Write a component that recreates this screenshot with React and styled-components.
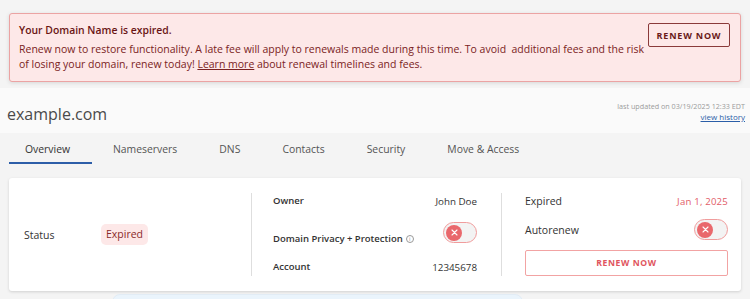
import React from "react";
import styled, { createGlobalStyle } from "styled-components";

const Global = createGlobalStyle`
  html, body { margin: 0; padding: 0; background: #f4f4f4; overflow: hidden; }
  body { font-family: "Open Sans", "Liberation Sans", sans-serif; }
  * { box-sizing: border-box; }
`;

const Page = styled.div`
  width: 750px;
  height: 299px;
  overflow: hidden;
  padding-top: 13px;
`;

const Alert = styled.div`
  margin: 0 9px;
  display: flex;
  align-items: flex-start;
  background: #fde8e8;
  border: 1px solid #eba3a3;
  border-radius: 3px;
  box-shadow: 0 1px 4px rgba(0, 0, 0, 0.12);
  padding: 8px 10px 8px 9px;
  height: 69px;
`;

const AlertText = styled.div`
  flex: 1;
  min-width: 0;
  color: #7a2323;
`;

const AlertTitle = styled.div`
  font-size: 10.4px;
  font-weight: 600;
  line-height: 16px;
  color: #6a1515;
  margin-bottom: 4px;
`;

const AlertBody = styled.div`
  font-size: 10.5px;
  line-height: 15px;
  white-space: nowrap;
  a { color: inherit; text-decoration: underline; }
`;

const OutlineButton = styled.button`
  flex-shrink: 0;
  font-family: inherit;
  background: ${(p) => p.$bg || "transparent"};
  border: 1px solid ${(p) => p.$border};
  color: ${(p) => p.$color};
  border-radius: 2px;
  font-size: ${(p) => p.$fs || "9px"};
  font-weight: 700;
  letter-spacing: ${(p) => p.$ls || "0.8px"};
  width: ${(p) => p.$w || "auto"};
  height: ${(p) => p.$h};
  margin-top: ${(p) => p.$mt || "0"};
  padding: 0;
  cursor: pointer;
`;

const Header = styled.div`
  margin-top: 6px;
  height: 45px;
  background: #fafafa;
  display: flex;
  justify-content: space-between;
  align-items: flex-start;
  padding: 0 5px 0 7px;
`;

const DomainName = styled.div`
  font-size: 16px;
  color: #4a4a4a;
  line-height: 24px;
  margin-top: 14px;
`;

const Updated = styled.div`
  text-align: right;
  margin-top: 13px;
`;

const UpdatedLine = styled.div`
  font-size: 7.2px;
  line-height: 10px;
  color: #9a9a9a;
`;

const HistoryLink = styled.a`
  display: block;
  font-size: 8px;
  line-height: 12px;
  color: #2b5ea8;
  text-decoration: underline;
`;

const Tabs = styled.div`
  display: flex;
  gap: 9px;
  padding-left: 9px;
  height: 32px;
`;

const Tab = styled.div`
  padding: 0 17px 0 16px;
  min-width: ${(p) => (p.$active ? "50px" : "0")};
  margin-right: ${(p) => (p.$active ? "-4px" : "0")};
  font-size: 10.4px;
  color: ${(p) => (p.$active ? "#333" : "#555")};
  border-bottom: 2px solid ${(p) => (p.$active ? "#2d5ea8" : "transparent")};
  height: 29px;
  line-height: 33px;
  box-sizing: content-box;
`;

const Card = styled.div`
  margin: 13px 9px 0;
  height: 113px;
  background: #fff;
  border-radius: 3px;
  box-shadow: 0 1px 3px rgba(0, 0, 0, 0.15);
  display: flex;
  padding: 15px 13px 15px 15px;
`;

const StatusCol = styled.div`
  width: 227px;
  display: flex;
  align-items: center;
`;

const StatusLabel = styled.div`
  width: 77px;
  font-size: 10.5px;
  color: #333;
`;

const Badge = styled.div`
  background: #fde8e8;
  color: #8a2a2a;
  font-size: 10.5px;
  line-height: 21px;
  padding: 0 5px;
  border-radius: 5px;
`;

const Divider = styled.div`
  width: 1px;
  background: #dedede;
`;

const InfoCol = styled.div`
  width: 249px;
  padding: 0 24px 0 21px;
  display: flex;
  flex-direction: column;
  gap: 13px;
`;

const SideCol = styled.div`
  flex: 1;
  padding-left: 23px;
  display: flex;
  flex-direction: column;
  gap: 10px;
`;

const Row = styled.div`
  display: flex;
  justify-content: space-between;
  align-items: ${(p) => p.$align || "center"};
  height: ${(p) => p.$h};
`;

const Label = styled.div`
  font-size: ${(p) => (p.$strong ? "9.5px" : "10.5px")};
  font-weight: ${(p) => (p.$strong ? 600 : 400)};
  color: #333;
  display: flex;
  align-items: center;
  gap: 3px;
  line-height: 14px;
`;

const Value = styled.div`
  font-size: ${(p) => p.$size || "9.8px"};
  color: ${(p) => p.$color || "#333"};
  letter-spacing: ${(p) => p.$ls || "0"};
`;

const Info = styled.span`
  display: inline-flex;
  width: 8px;
  height: 8px;
  border: 0.8px solid #999;
  border-radius: 50%;
  font-size: 6px;
  line-height: 1;
  color: #999;
  align-items: center;
  justify-content: center;
  font-weight: 400;
`;

const Track = styled.div`
  width: 34px;
  height: 21px;
  border-radius: 11px;
  border: 1px solid #f09c9c;
  background: #f3f3f3;
  display: flex;
  align-items: center;
  padding-left: 2px;
  margin-bottom: ${(p) => p.$mb || "0"};
`;

const Knob = styled.div`
  width: 16px;
  height: 16px;
  border-radius: 50%;
  background: #e9686c;
  display: flex;
  align-items: center;
  justify-content: center;
`;

const Peek = styled.div`
  margin: 3px 0 0 112px;
  width: 411px;
  height: 20px;
  background: #eaf4fc;
  border: 1px solid #e2ecf5;
  border-radius: 8px;
`;

const Toggle = ({ mb }) => (
  <Track $mb={mb}>
    <Knob>
      <svg width="7" height="7" viewBox="0 0 7 7">
        <path d="M1 1L6 6M6 1L1 6" stroke="#fff" strokeWidth="1.1" strokeLinecap="round" />
      </svg>
    </Knob>
  </Track>
);

const tabs = ["Overview", "Nameservers", "DNS", "Contacts", "Security", "Move & Access"];

export default function App() {
  return (
    <>
      <Global />
      <Page>
        <Alert>
          <AlertText>
            <AlertTitle>Your Domain Name is expired.</AlertTitle>
            <AlertBody>
              Renew now to restore functionality. A late fee will apply to renewals made during this time. To avoid{"\u00a0"} additional fees and the risk
              <br />
              of losing your domain, renew today! <a href="#">Learn more</a> about renewal timelines and fees.
            </AlertBody>
          </AlertText>
          <OutlineButton $border="#8a3a3a" $color="#6a1a1a" $w="82px" $h="24px" $mt="1px">
            RENEW NOW
          </OutlineButton>
        </Alert>

        <Header>
          <DomainName>example.com</DomainName>
          <Updated>
            <UpdatedLine>last updated on 03/19/2025 12:33 EDT</UpdatedLine>
            <HistoryLink href="#">view history</HistoryLink>
          </Updated>
        </Header>

        <Tabs>
          {tabs.map((t, i) => (
            <Tab key={t} $active={i === 0}>
              {t}
            </Tab>
          ))}
        </Tabs>

        <Card>
          <StatusCol>
            <StatusLabel>Status</StatusLabel>
            <Badge>Expired</Badge>
          </StatusCol>
          <Divider />
          <InfoCol>
            <Row $h="16px">
              <Label $strong>Owner</Label>
              <Value>John Doe</Value>
            </Row>
            <Row $h="24px" $align="flex-end">
              <Label $strong>
                Domain Privacy + Protection <Info>i</Info>
              </Label>
              <Toggle mb="3px" />
            </Row>
            <Row $h="16px">
              <Label $strong>Account</Label>
              <Value>12345678</Value>
            </Row>
          </InfoCol>
          <Divider />
          <SideCol>
            <Row $h="16px">
              <Label>Expired</Label>
              <Value $size="9.6px" $color="#e25c68" $ls="0.2px">Jan 1, 2025</Value>
            </Row>
            <Row $h="21px">
              <Label>Autorenew</Label>
              <Toggle />
            </Row>
            <OutlineButton $border="#f2a3a3" $color="#e0555e" $w="100%" $h="26px" $fs="8.6px" $ls="0.6px">
              RENEW NOW
            </OutlineButton>
          </SideCol>
        </Card>
        <Peek />
      </Page>
    </>
  );
}
